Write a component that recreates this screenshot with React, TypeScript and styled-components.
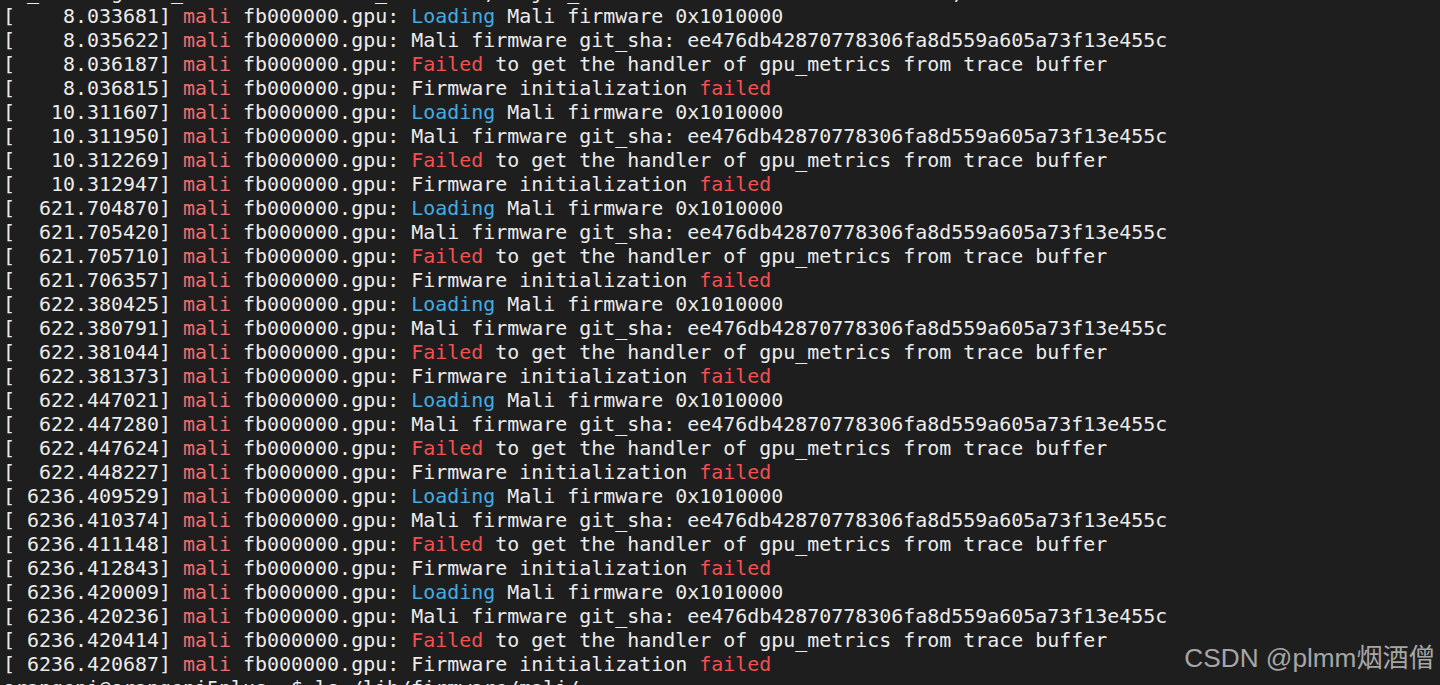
import React from "react";
import styled, { createGlobalStyle } from "styled-components";

const Global = createGlobalStyle`
  html, body {
    margin: 0;
    padding: 0;
    background: #1e1e1e;
    overflow: hidden;
  }
`;

const Window = styled.div`
  position: relative;
  width: 1440px;
  height: 685px;
  overflow: hidden;
  background: #1e1e1e;
`;

const Screen = styled.main`
  display: flex;
  flex-direction: column;
  margin-top: -20px;
  padding-left: 3px;
  font-family: "DejaVu Sans Mono", "Liberation Mono", monospace;
  font-size: 19.95px;
  line-height: 24px;
  color: #ececec;
`;

const Line = styled.div`
  white-space: pre;
  height: 24px;
`;

const Tone = styled.span<{ $tone: "subsys" | "error" | "info" }>`
  color: ${(p) =>
    p.$tone === "subsys" ? "#f46c6c" : p.$tone === "error" ? "#f44e4e" : "#42ade4"};
`;

const Watermark = styled.div`
  position: absolute;
  right: 5px;
  bottom: 12px;
  font-family: "Liberation Sans", Arial, "Noto Sans CJK SC", sans-serif;
  font-size: 26.2px;
  line-height: 30px;
  color: #a6a6a6;
`;

type Kind = "A" | "B" | "C" | "D";

const stamps: [string, Kind][] = [
  ["8.033681", "A"], ["8.035622", "B"], ["8.036187", "C"], ["8.036815", "D"],
  ["10.311607", "A"], ["10.311950", "B"], ["10.312269", "C"], ["10.312947", "D"],
  ["621.704870", "A"], ["621.705420", "B"], ["621.705710", "C"], ["621.706357", "D"],
  ["622.380425", "A"], ["622.380791", "B"], ["622.381044", "C"], ["622.381373", "D"],
  ["622.447021", "A"], ["622.447280", "B"], ["622.447624", "C"], ["622.448227", "D"],
  ["6236.409529", "A"], ["6236.410374", "B"], ["6236.411148", "C"], ["6236.412843", "D"],
  ["6236.420009", "A"], ["6236.420236", "B"], ["6236.420414", "C"], ["6236.420687", "D"],
];

const Message: React.FC<{ kind: Kind }> = ({ kind }) => {
  switch (kind) {
    case "A":
      return (
        <>
          <Tone $tone="info">Loading</Tone> Mali firmware 0x1010000
        </>
      );
    case "B":
      return <>Mali firmware git_sha: ee476db42870778306fa8d559a605a73f13e455c</>;
    case "C":
      return (
        <>
          <Tone $tone="error">Failed</Tone> to get the handler of gpu_metrics from trace buffer
        </>
      );
    default:
      return (
        <>
          Firmware initialization <Tone $tone="error">failed</Tone>
        </>
      );
  }
};

const topLine = (() => {
  const cells = Array.from({ length: 96 }, () => " ");
  const marks: [number, string][] = [
    [2, "_"], [9, "g"], [14, "_"], [31, "_"], [40, ","], [44, "j"], [47, "_"], [79, ","],
  ];
  marks.forEach(([c, ch]) => (cells[c] = ch));
  return cells.join("").replace(/\s+$/, "");
})();

export default function App() {
  return (
    <Window>
      <Global />
      <Screen>
        <Line>{topLine}</Line>
        {stamps.map(([t, k]) => (
          <Line key={t}>
            [{t.padStart(12, " ")}] <Tone $tone="subsys">mali</Tone> fb000000.gpu: <Message kind={k} />
          </Line>
        ))}
        <Line>orangepi@orangepi5plus:~$ ls /lib/firmware/mali/</Line>
      </Screen>
      <Watermark>CSDN @plmm烟酒僧</Watermark>
    </Window>
  );
}
